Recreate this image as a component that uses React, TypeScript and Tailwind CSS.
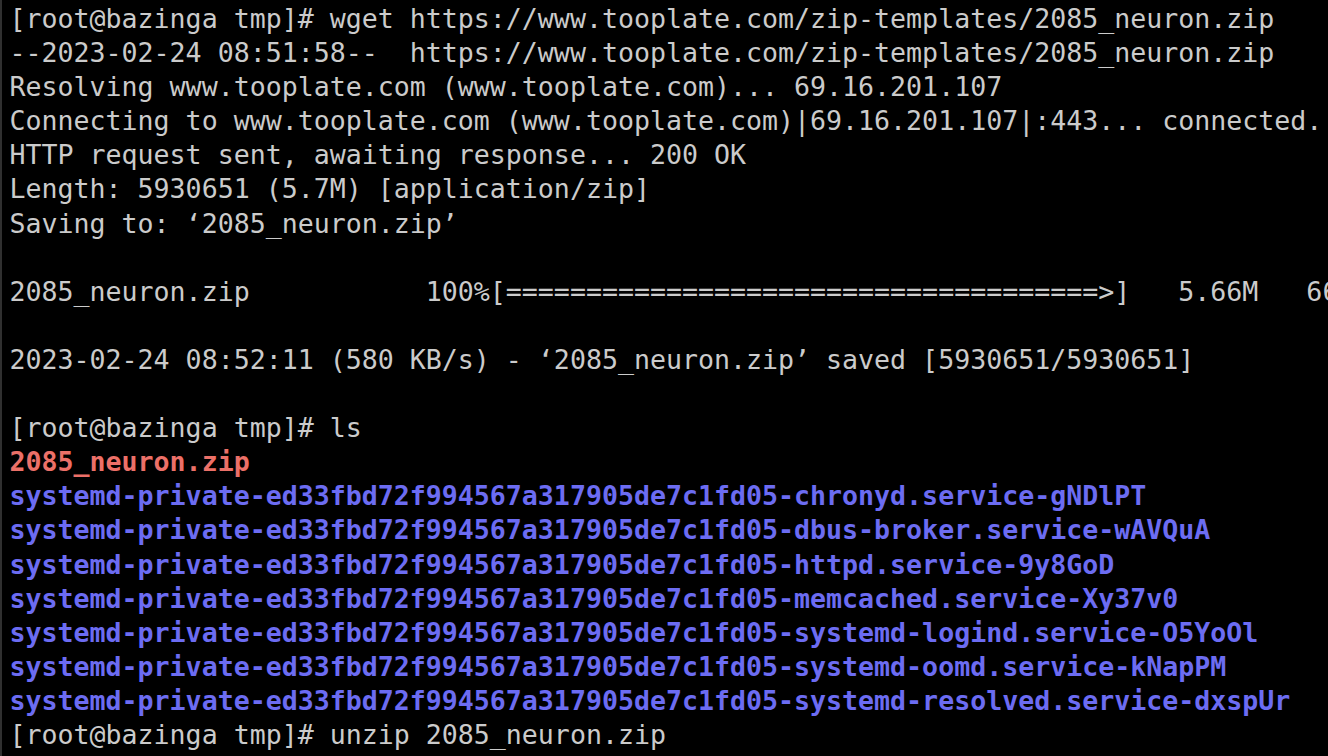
import React from 'react';

type Line = { text: string; tone?: 'plain' | 'zip' | 'dir' };

const dirs = [
  'chronyd.service-gNDlPT',
  'dbus-broker.service-wAVQuA',
  'httpd.service-9y8GoD',
  'memcached.service-Xy37v0',
  'systemd-logind.service-O5YoOl',
  'systemd-oomd.service-kNapPM',
  'systemd-resolved.service-dxspUr',
];

const lines: Line[] = [
  { text: '[root@bazinga tmp]# wget https://www.tooplate.com/zip-templates/2085_neuron.zip' },
  { text: '--2023-02-24 08:51:58--  https://www.tooplate.com/zip-templates/2085_neuron.zip' },
  { text: 'Resolving www.tooplate.com (www.tooplate.com)... 69.16.201.107' },
  { text: 'Connecting to www.tooplate.com (www.tooplate.com)|69.16.201.107|:443... connected.' },
  { text: 'HTTP request sent, awaiting response... 200 OK' },
  { text: 'Length: 5930651 (5.7M) [application/zip]' },
  { text: 'Saving to: \u20182085_neuron.zip\u2019' },
  { text: '' },
  { text: '2085_neuron.zip           100%[' + '='.repeat(37) + '>]   5.66M   660KB/s    in 11s' },
  { text: '' },
  { text: '2023-02-24 08:52:11 (580 KB/s) - \u20182085_neuron.zip\u2019 saved [5930651/5930651]' },
  { text: '' },
  { text: '[root@bazinga tmp]# ls' },
  { text: '2085_neuron.zip', tone: 'zip' },
  ...dirs.map((d) => ({ text: 'systemd-private-ed33fbd72f994567a317905de7c1fd05-' + d, tone: 'dir' as const })),
  { text: '[root@bazinga tmp]# unzip 2085_neuron.zip' },
];

const toneClass = {
  plain: 'text-[#cbcbcb]',
  zip: 'text-[#ec7068] font-bold',
  dir: 'text-[#6c6cf2] font-bold',
};

export default function App() {
  return (
    <div className="w-[1328px] h-[756px] bg-black overflow-hidden border-l-2 border-[#303030] pl-[7.5px] pt-[2px] font-['DejaVu_Sans_Mono',monospace] text-[26.6px] leading-[34.1px]">
      {lines.map((line, i) => (
        <div key={i} className={`whitespace-pre h-[34.1px] ${toneClass[line.tone ?? 'plain']}`}>
          {line.text}
        </div>
      ))}
    </div>
  );
}
